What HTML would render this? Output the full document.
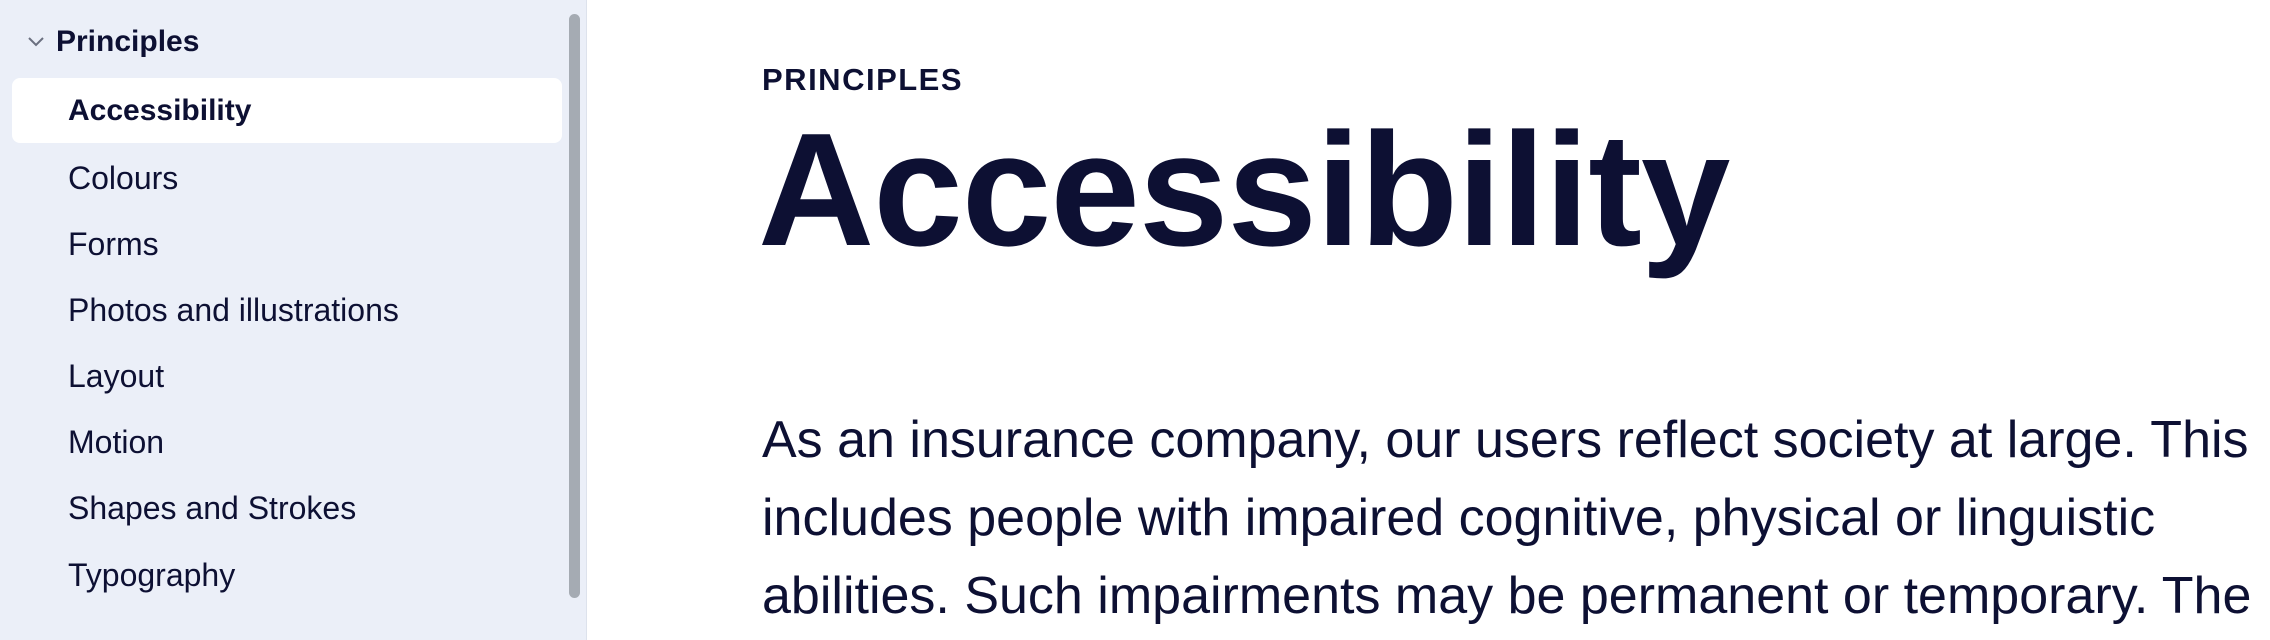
<!DOCTYPE html>
<html><head><meta charset="utf-8">
<style>
html,body{margin:0;padding:0;width:2270px;height:640px;overflow:hidden;background:#fff;font-family:"Liberation Sans",sans-serif;color:#0d1033}
#side{position:absolute;left:0;top:0;width:586px;height:640px;background:#ebeff8;border-right:1px solid #dde2ec}
#side .hd{position:absolute;left:56px;top:24px;font-size:30px;font-weight:bold;line-height:36px}
#side .chev{position:absolute;left:27px;top:36px}
.item{position:absolute;left:68px;font-size:32px;line-height:40px;white-space:nowrap;margin-top:-20px}
.sel{position:absolute;left:12px;top:78px;width:550px;height:65px;background:#fff;border-radius:8px}
.sb{position:absolute;left:569px;top:14px;width:11px;height:584px;background:#a5abb3;border-radius:6px}
#main{position:absolute;left:762px;top:0}
.eyebrow{position:absolute;top:62px;left:0;font-size:31px;font-weight:bold;letter-spacing:1.5px;line-height:36px}
.title{position:absolute;top:95px;left:-4px;font-size:161px;font-weight:bold;line-height:190px;letter-spacing:-1px;white-space:nowrap}
.p{position:absolute;left:0;font-size:52px;line-height:78px;white-space:nowrap}
</style></head><body>
<div id="side">
<svg class="chev" width="18" height="12" viewBox="0 0 18 12"><path d="M2 2 L9 9 L16 2" fill="none" stroke="#6b7080" stroke-width="2"/></svg>
<div class="hd">Principles</div>
<div class="sel"></div>
<div class="item" style="top:111px;font-weight:bold;font-size:30px">Accessibility</div>
<div class="item" style="top:178px">Colours</div>
<div class="item" style="top:244px">Forms</div>
<div class="item" style="top:310px">Photos and illustrations</div>
<div class="item" style="top:376px">Layout</div>
<div class="item" style="top:442px">Motion</div>
<div class="item" style="top:508px">Shapes and Strokes</div>
<div class="item" style="top:575px">Typography</div>
<div class="sb"></div>
</div>
<div id="main">
<div class="eyebrow">PRINCIPLES</div>
<div class="title">Accessibility</div>
<div class="p" style="top:401px">As an insurance company, our users reflect society at large. This</div>
<div class="p" style="top:479px">includes people with impaired cognitive, physical or linguistic</div>
<div class="p" style="top:557px">abilities. Such impairments may be permanent or temporary. The</div>
</div>
</body></html>
